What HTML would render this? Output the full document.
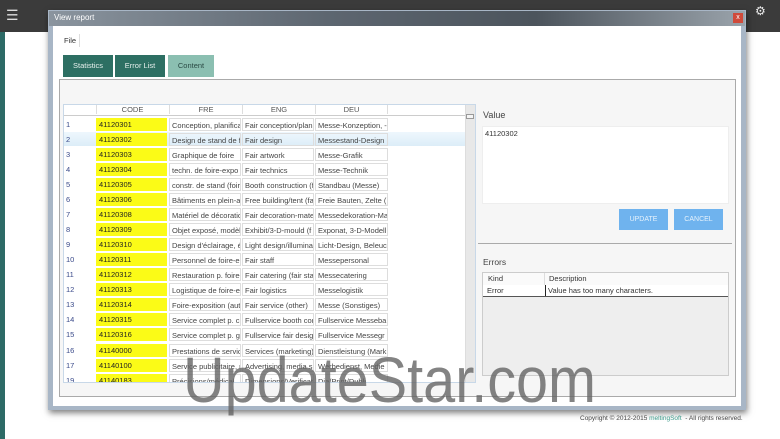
<!DOCTYPE html>
<html><head><style>
*{margin:0;padding:0;box-sizing:border-box}
body{width:780px;height:439px;overflow:hidden;background:#fff;font-family:"Liberation Sans",sans-serif;position:relative;font-size:8px;color:#333}
.a{position:absolute}
.row{position:absolute;left:63px;width:402px;height:15px}
.row div{position:absolute;top:1px;height:13px;line-height:13px;white-space:nowrap;overflow:hidden;font-size:7.5px;color:#444}
.n{left:3px;color:#3a4a8a!important}
.c{left:33px;width:71px;background:#fbfb17;padding-left:3px;color:#222!important}
.f{left:106px;width:72px;border:1px solid #ddd;padding-left:2px}
.e{left:179px;width:72px;border:1px solid #ddd;padding-left:2px}
.d{left:252px;width:73px;border:1px solid #ddd;padding-left:2px}
</style></head><body>
<div class="a" style="left:0;top:0;width:780px;height:32px;background:#3b3b3b"></div>
<div class="a" style="left:0;top:32px;width:5px;height:407px;background:#2d6a66"></div>
<div class="a" style="left:6px;top:7px;color:#ddd;font-size:14px">☰</div>
<div class="a" style="left:755px;top:4px;color:#eee;font-size:12px">⚙</div>
<div class="a" style="left:48px;top:10px;width:698px;height:400px;background:#a8b6c6;box-shadow:1px 3px 6px rgba(0,0,0,.5)"></div>
<div class="a" style="left:49px;top:11px;width:696px;height:15px;background:linear-gradient(90deg,#8a949e,#5d6670 40%,#4c545c 70%,#9aa3ab)"></div>
<div class="a" style="left:54px;top:13px;color:#fff;font-size:8px">View report</div>
<div class="a" style="left:733px;top:13px;width:10px;height:10px;background:#d04a3a;color:#fff;font-size:7px;text-align:center;line-height:10px">x</div>
<div class="a" style="left:53px;top:26px;width:688px;height:380px;background:#fff"></div>
<div class="a" style="left:61px;top:34px;padding:2px 3px;border-right:1px solid #ddd;font-size:7.5px;color:#333">File</div>
<div class="a" style="left:63px;top:55px;width:50px;height:22px;background:#2d6f63;color:#e8f0ee;font-size:7.5px;text-align:center;line-height:22px">Statistics</div>
<div class="a" style="left:115px;top:55px;width:50px;height:22px;background:#2d6f63;color:#e8f0ee;font-size:7.5px;text-align:center;line-height:22px">Error List</div>
<div class="a" style="left:168px;top:55px;width:46px;height:22px;background:#8bbfb1;color:#2a4a44;font-size:7.5px;text-align:center;line-height:22px">Content</div>
<div class="a" style="left:59px;top:79px;width:677px;height:318px;border:1px solid #aaa;background:#f6f6f6"></div>
<div class="a" style="left:63px;top:104px;width:413px;height:279px;background:#fff;border:1px solid #c8d8e8"></div>
<div class="a" style="left:465px;top:105px;width:10px;height:277px;background:#e8e8e8;border-left:1px solid #ddd"></div>
<div class="a" style="left:466px;top:114px;width:8px;height:5px;border:1px solid #999;background:#f4f4f4"></div>
<div class="a" style="left:64px;top:105px;width:401px;height:11px;border-bottom:1px solid #ccc;font-size:7.5px;color:#555">
<span class="a" style="left:32px;width:72px;text-align:center;border-left:1px solid #ddd">CODE</span>
<span class="a" style="left:105px;width:73px;text-align:center;border-left:1px solid #ddd">FRE</span>
<span class="a" style="left:178px;width:73px;text-align:center;border-left:1px solid #ddd">ENG</span>
<span class="a" style="left:251px;width:73px;text-align:center;border-left:1px solid #ddd;border-right:1px solid #ddd">DEU</span>
</div>
<div class="a" style="left:64px;top:132px;width:401px;height:14px;background:linear-gradient(#eef7fd,#dcedf8)"></div>
<div class="row" style="top:117px"><div class="n">1</div><div class="c">41120301</div><div class="f">Conception, planifica</div><div class="e">Fair conception/plani</div><div class="d">Messe-Konzeption, -</div></div>
<div class="row" style="top:132px"><div class="n">2</div><div class="c">41120302</div><div class="f">Design de stand de f</div><div class="e">Fair design</div><div class="d">Messestand-Design</div></div>
<div class="row" style="top:147px"><div class="n">3</div><div class="c">41120303</div><div class="f">Graphique de foire</div><div class="e">Fair artwork</div><div class="d">Messe-Grafik</div></div>
<div class="row" style="top:162px"><div class="n">4</div><div class="c">41120304</div><div class="f">techn. de foire-expo</div><div class="e">Fair technics</div><div class="d">Messe-Technik</div></div>
<div class="row" style="top:177px"><div class="n">5</div><div class="c">41120305</div><div class="f">constr. de stand (foir</div><div class="e">Booth construction (f</div><div class="d">Standbau (Messe)</div></div>
<div class="row" style="top:192px"><div class="n">6</div><div class="c">41120306</div><div class="f">Bâtiments en plein-a</div><div class="e">Free building/tent (fa</div><div class="d">Freie Bauten, Zelte (</div></div>
<div class="row" style="top:207px"><div class="n">7</div><div class="c">41120308</div><div class="f">Matériel de décoratio</div><div class="e">Fair decoration-mate</div><div class="d">Messedekoration-Ma</div></div>
<div class="row" style="top:222px"><div class="n">8</div><div class="c">41120309</div><div class="f">Objet exposé, modèl</div><div class="e">Exhibit/3-D-mould (f</div><div class="d">Exponat, 3-D-Modell</div></div>
<div class="row" style="top:237px"><div class="n">9</div><div class="c">41120310</div><div class="f">Design d'éclairage, é</div><div class="e">Light design/illuminat</div><div class="d">Licht-Design, Beleuc</div></div>
<div class="row" style="top:252px"><div class="n">10</div><div class="c">41120311</div><div class="f">Personnel de foire-e:</div><div class="e">Fair staff</div><div class="d">Messepersonal</div></div>
<div class="row" style="top:267px"><div class="n">11</div><div class="c">41120312</div><div class="f">Restauration p. foire-</div><div class="e">Fair catering (fair sta</div><div class="d">Messecatering</div></div>
<div class="row" style="top:282px"><div class="n">12</div><div class="c">41120313</div><div class="f">Logistique de foire-e:</div><div class="e">Fair logistics</div><div class="d">Messelogistik</div></div>
<div class="row" style="top:297px"><div class="n">13</div><div class="c">41120314</div><div class="f">Foire-exposition (aut</div><div class="e">Fair service (other)</div><div class="d">Messe (Sonstiges)</div></div>
<div class="row" style="top:312px"><div class="n">14</div><div class="c">41120315</div><div class="f">Service complet p. c</div><div class="e">Fullservice booth cor</div><div class="d">Fullservice Messeba</div></div>
<div class="row" style="top:327px"><div class="n">15</div><div class="c">41120316</div><div class="f">Service complet p. g</div><div class="e">Fullservice fair desig</div><div class="d">Fullservice Messegr</div></div>
<div class="row" style="top:343px"><div class="n">16</div><div class="c">41140000</div><div class="f">Prestations de servic</div><div class="e">Services (marketing)</div><div class="d">Dienstleistung (Mark</div></div>
<div class="row" style="top:358px"><div class="n">17</div><div class="c">41140100</div><div class="f">Service publicitaire, r</div><div class="e">Advertising, media s</div><div class="d">Werbedienst, Medie</div></div>
<div class="row" style="top:373px;height:9px;overflow:hidden"><div class="n">19</div><div class="c">41140183</div><div class="f">Précisions/médical</div><div class="e">Dimensions/Verification</div><div class="d">Dia/Print/Dubli</div></div>
<div class="a" style="left:483px;top:110px;font-size:9px;color:#444">Value</div>
<div class="a" style="left:482px;top:126px;width:247px;height:78px;background:#fff;border:1px solid #eee;padding:2px;font-size:7.5px;color:#333">41120302</div>
<div class="a" style="left:619px;top:209px;width:49px;height:21px;background:#6fb3ee;color:#e6f2fc;font-size:7px;text-align:center;line-height:21px">UPDATE</div>
<div class="a" style="left:674px;top:209px;width:49px;height:21px;background:#6fb3ee;color:#e6f2fc;font-size:7px;text-align:center;line-height:21px">CANCEL</div>
<div class="a" style="left:478px;top:243px;width:254px;height:1px;background:#aaa"></div>
<div class="a" style="left:483px;top:257px;font-size:8.5px;color:#444">Errors</div>
<div class="a" style="left:482px;top:272px;width:247px;height:104px;background:#eee;border:1px solid #ccc"></div>
<div class="a" style="left:483px;top:273px;width:245px;height:12px;background:#fafafa;font-size:7.5px;line-height:12px"><span class="a" style="left:5px">Kind</span><span class="a" style="left:61px;border-left:1px solid #ddd;padding-left:4px">Description</span></div>
<div class="a" style="left:483px;top:285px;width:245px;height:12px;background:#fff;border-bottom:1px solid #555;font-size:7.5px;line-height:11px"><span class="a" style="left:4px">Error</span><span class="a" style="left:62px;border-left:1px solid #222;padding-left:2px">Value has too many characters.</span></div>
<div class="a" style="left:580px;top:415px;font-size:6.5px;color:#444">Copyright © 2012-2015 <span style="color:#3a9a8a">meltingSoft</span> &nbsp;- All rights reserved.</div>
<div class="a" style="left:183px;top:348px;font-size:64px;line-height:64px;color:rgba(100,100,100,.8);font-family:'Liberation Sans',sans-serif;white-space:nowrap;transform:scaleX(0.9);transform-origin:0 0">UpdateStar.com</div>
</body></html>
